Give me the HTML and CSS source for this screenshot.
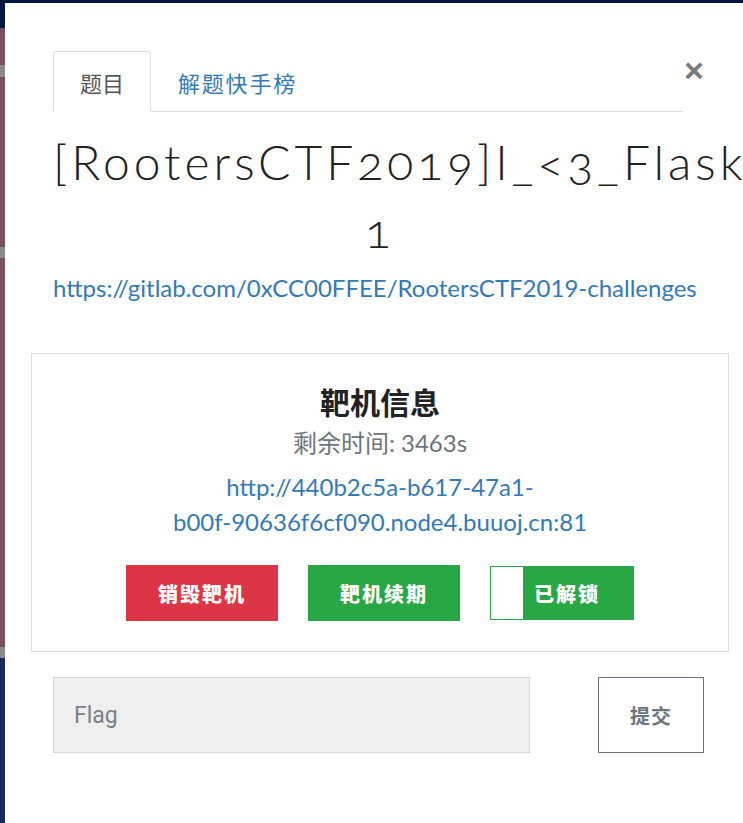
FILE: index.html
```html
<!DOCTYPE html>
<html lang="zh">
<head>
<meta charset="utf-8">
<title>RootersCTF2019 I_&lt;3_Flask</title>
<link rel="stylesheet" href="styles.css">
</head>
<body>
<div class="modal">
  <div class="modal-head">
    <ul class="tabs">
      <li class="tab active">题目</li>
      <li class="tab"><a href="#">解题快手榜</a></li>
    </ul>
    <button class="close" aria-label="close">×</button>
  </div>
  <div class="content">
    <h2 class="title">[RootersCTF2019]I_&lt;3_Flask 1</h2>
    <a class="source" href="#">https://gitlab.com/0xCC00FFEE/RootersCTF2019-challenges</a>
    <div class="target">
      <h3 class="target-title">靶机信息</h3>
      <p class="remain">剩余时间: 3463s</p>
      <a class="target-url" href="#">http://440b2c5a-b617-47a1-<br>b00f-90636f6cf090.node4.buuoj.cn:81</a>
      <div class="actions">
        <button class="btn btn-red">销毁靶机</button>
        <button class="btn btn-green">靶机续期</button>
        <button class="btn btn-toggle"><span class="knob"></span><span class="toggle-text">已解锁</span></button>
      </div>
    </div>
    <div class="flag-row">
      <input class="flag-input" type="text" placeholder="Flag">
      <button class="submit">提交</button>
    </div>
  </div>
</div>
</body>
</html>
```
FILE: styles.css
```css
html, body {
  margin: 0;
  height: 100%;
  overflow: hidden;
}
body {
  padding: 3px 0 0 5px;
  box-sizing: border-box;
  font-family: "Lato", "Noto Sans CJK SC", sans-serif;
  background: linear-gradient(to bottom,
    #03173f 0 28px, #7a4f5e 28px 65px, #8a8a8a 65px 77px,
    #7a4f5e 77px 247px, #8a8a8a 247px 258px, #7a4f5e 258px 647px,
    #8a8a8a 647px 658px, #1d2a5c 658px);
}
.modal {
  background: #fff;
  width: 760px;
  height: 100%;
  box-sizing: border-box;
  padding: 48px 0 0 48px;
}
.modal-head {
  display: flex;
  align-items: flex-start;
  width: 654px;
}
.tabs {
  list-style: none;
  margin: 0;
  padding: 0;
  display: flex;
  width: 630px;
  border-bottom: 1px solid #ddd;
}
.tab {
  font-family: "Noto Sans CJK SC", sans-serif;
  font-size: 22px;
  line-height: 30px;
  padding: 15px 26px 14px;
  border: 1px solid transparent;
  border-radius: 4px 4px 0 0;
  margin-bottom: -1px;
  color: #555;
}
.tab.active {
  border-color: #ddd;
  border-bottom-color: #fff;
  background: #fff;
}
.tab a {
  color: #337ab7;
  text-decoration: none;
  letter-spacing: 1.8px;
}
.close {
  margin: 4px 0 0 1px;
  border: 0;
  background: none;
  padding: 0;
  font-family: "Liberation Sans", sans-serif;
  font-size: 34px;
  font-weight: bold;
  line-height: 30px;
  color: #7a7a7a;
  width: 20px;
}
.content {
  width: 654px;
}
.title {
  margin: 16px 0 0;
  font-family: "Lato", sans-serif;
  font-weight: 300;
  font-size: 48px;
  line-height: 68px;
  letter-spacing: 4px;
  color: #222;
  text-align: center;
  font-variant-numeric: oldstyle-nums;
}
.source {
  display: block;
  margin-top: 9px;
  font-size: 24px;
  line-height: 30px;
  color: #337ab7;
  text-decoration: none;
  white-space: nowrap;
}
.target {
  margin: 50px -22px 0;
  border: 1px solid #ddd;
  padding: 27px 0 30px;
  text-align: center;
}
.target-title {
  margin: 0;
  font-family: "Noto Sans CJK SC", sans-serif;
  font-size: 30px;
  line-height: 40px;
  font-weight: bold;
  color: #222;
}
.remain {
  margin: 7px 0 0;
  font-size: 24px;
  line-height: 30px;
  color: #6c757d;
}
.target-url {
  display: block;
  margin-top: 11px;
  font-size: 24px;
  line-height: 35px;
  color: #337ab7;
  text-decoration: none;
}
.actions {
  display: flex;
  justify-content: center;
  align-items: center;
  gap: 30px;
  margin-top: 26px;
}
.btn {
  border: 0;
  width: 152px;
  height: 56px;
  font-family: "Noto Sans CJK SC", sans-serif;
  font-size: 20px;
  font-weight: 900;
  letter-spacing: 2px;
  color: #fff;
  padding: 0;
}
.btn-red { background: #dc3545; }
.btn-green { background: #28a745; }
.btn-toggle {
  width: 144px;
  height: 54px;
  background: #28a745;
  border: 1px solid #28a745;
  display: flex;
  align-items: stretch;
}
.knob {
  width: 32px;
  background: #fff;
}
.toggle-text {
  flex: 1;
  display: flex;
  align-items: center;
  justify-content: center;
  padding-right: 22px;
}
.flag-row {
  display: flex;
  justify-content: space-between;
  margin-top: 25px;
  width: 651px;
}
.flag-input {
  width: 477px;
  height: 76px;
  box-sizing: border-box;
  background: #efefef;
  border: 1px solid #d2d6dc;
  padding: 0 20px;
  font-family: "Roboto", sans-serif;
  font-size: 23px;
  outline: none;
}
.flag-input::placeholder {
  color: #7b8188;
}
.submit {
  width: 106px;
  height: 76px;
  background: #fff;
  border: 1px solid #6c757d;
  font-family: "Noto Sans CJK SC", sans-serif;
  font-size: 20px;
  font-weight: bold;
  color: #6c757d;
  letter-spacing: 1px;
}
```
